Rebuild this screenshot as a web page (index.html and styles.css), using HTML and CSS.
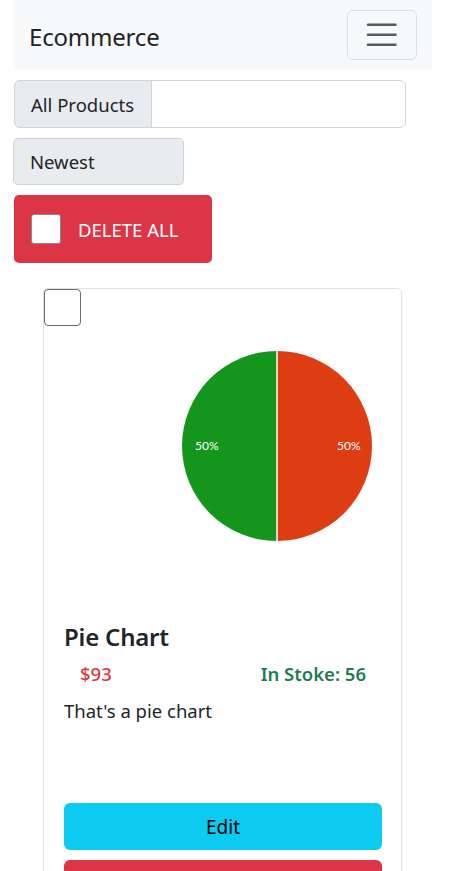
FILE: index.html
```html
<!DOCTYPE html>
<html lang="en">
<head>
<meta charset="utf-8">
<title>Ecommerce</title>
<link rel="stylesheet" href="styles.css">
</head>
<body>
<div class="wrap">
  <nav class="navbar">
    <span class="brand">Ecommerce</span>
    <button class="toggler" type="button" aria-label="Toggle navigation">
      <svg class="toggler-icon" viewBox="0 0 30 30" width="37.5" height="37.5">
        <path d="M4 7h22M4 15h22M4 23h22" stroke="rgba(33,37,41,0.75)" stroke-width="2" stroke-linecap="round" fill="none"/>
      </svg>
    </button>
  </nav>

  <div class="input-group">
    <span class="addon">All Products</span>
    <input class="field" type="text">
  </div>

  <div class="select">Newest</div>

  <button class="btn-delete-all" type="button">
    <input class="check check-sm" type="checkbox">
    <span>DELETE ALL</span>
  </button>

  <div class="card">
    <input class="check check-card" type="checkbox">
    <div class="chart">
      <svg class="pie" viewBox="0 0 190 190" width="190" height="190">
        <path d="M95 0 A95 95 0 0 1 95 190 Z" fill="#de3d14"/>
        <path d="M95 0 A95 95 0 0 0 95 190 Z" fill="#14961d"/>
        <line x1="95" y1="0" x2="95" y2="190" stroke="#ffffff" stroke-width="1.5"/>
        <text x="13" y="99" class="pie-label">50%</text>
        <text x="155" y="99" class="pie-label">50%</text>
      </svg>
    </div>
    <div class="card-body">
      <h5 class="card-title">Pie Chart</h5>
      <div class="meta">
        <span class="price">$93</span>
        <span class="stock">In Stoke: 56</span>
      </div>
      <p class="desc">That's a pie chart</p>
      <button class="btn btn-edit" type="button">Edit</button>
      <button class="btn btn-delete" type="button">Delete</button>
    </div>
  </div>
</div>
</body>
</html>
```

FILE: styles.css
```css
* { box-sizing: border-box; }

html, body {
  margin: 0;
  padding: 0;
  background: #ffffff;
}

body {
  font-family: "Noto Sans", "Open Sans", sans-serif;
  color: #212529;
  font-size: 20px;
}

.wrap {
  width: 418px;
  margin-left: 14px;
}

.navbar {
  height: 70px;
  background: #f8f9fa;
  display: flex;
  align-items: center;
  justify-content: space-between;
  padding: 0 15px 0 15px;
}

.brand {
  font-size: 24px;
  line-height: 1;
  color: #212529;
  letter-spacing: -0.2px;
  margin-top: 3px;
}

.toggler {
  width: 70px;
  height: 50px;
  padding: 0;
  display: flex;
  align-items: center;
  justify-content: center;
  background: transparent;
  border: 1px solid rgba(0, 0, 0, 0.1);
  border-radius: 6px;
}

.toggler-icon { display: block; }

.input-group {
  margin-top: 10px;
  display: flex;
  width: 392px;
  height: 48px;
}

.addon {
  display: flex;
  align-items: center;
  padding: 0 15px 0 16px;
  width: 138px;
  flex: none;
  background: #e9ecef;
  border: 1px solid #ced4da;
  border-radius: 6px 0 0 6px;
  font-size: 18.5px;
  white-space: nowrap;
}

.field {
  flex: 1 1 0;
  width: 0;
  min-width: 0;
  margin: 0 0 0 -1px;
  border: 1px solid #ced4da;
  border-radius: 0 6px 6px 0;
  background: #ffffff;
  font: inherit;
}

.select {
  margin-top: 10px;
  margin-left: -1px;
  width: 171px;
  height: 47px;
  background: #e9ecef;
  border: 1px solid #ced4da;
  border-radius: 5px;
  display: flex;
  align-items: center;
  padding-left: 16px;
  font-size: 18.5px;
}

.btn-delete-all {
  margin-top: 10px;
  width: 198px;
  height: 68px;
  background: #dc3545;
  border: none;
  border-radius: 5px;
  display: flex;
  align-items: center;
  padding: 0 0 0 17px;
  color: #ffffff;
  font-family: inherit;
  font-size: 18.5px;
  gap: 17px;
}

.check {
  -webkit-appearance: none;
  appearance: none;
  margin: 0;
  background: #ffffff;
  display: block;
  flex: none;
}

.check-sm {
  width: 30px;
  height: 30px;
  border: 1.5px solid #8a8a8a;
  border-radius: 3px;
}

.card {
  margin-top: 25px;
  margin-left: 29px;
  width: 359px;
  height: 600px;
  border: 1px solid #dee2e6;
  border-radius: 5px;
}

.check-card {
  width: 37px;
  height: 37px;
  margin-left: 0;
  border: 1.5px solid #6b6b6b;
  border-radius: 4px;
}

.chart {
  padding: 25px 0 0 138px;
  height: 276px;
}

.pie { display: block; }

.pie-label {
  font-family: Lato, "Noto Sans", sans-serif;
  font-size: 12px;
  fill: #ffffff;
}

.card-body {
  padding: 20px 20px 0 20px;
}

.card-title {
  margin: 0 0 7px 0;
  font-size: 24px;
  line-height: 30px;
  font-weight: 600;
  letter-spacing: -0.2px;
}

.meta {
  display: flex;
  justify-content: space-between;
  padding: 0 15px 0 16px;
  font-size: 18.5px;
  font-weight: 600;
  line-height: 30px;
}

.price { color: #dc3545; font-weight: 500; }
.stock { color: #1f7a55; }

.desc {
  margin: 7px 0 0 0;
  font-size: 18.5px;
  line-height: 30px;
}

.btn {
  display: block;
  width: 318px;
  height: 47px;
  border: none;
  border-radius: 6px;
  font-family: inherit;
  font-size: 19px;
  color: #000000;
}

.btn-edit {
  margin-top: 77px;
  background: #0dcaf0;
}

.btn-delete {
  margin-top: 10px;
  background: #dc3545;
  color: #ffffff;
}
```
